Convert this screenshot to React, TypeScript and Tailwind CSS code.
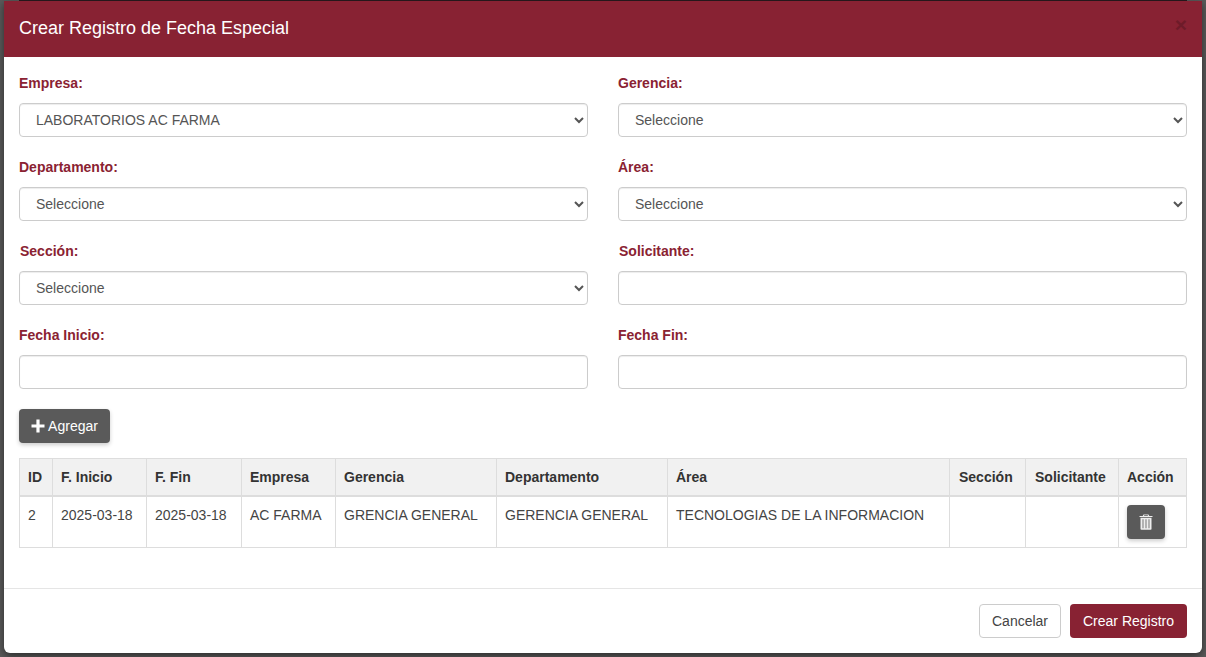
import React from "react";

const font = { fontFamily: '"Liberation Sans", Arial, sans-serif' };
const cols = [33, 94, 95, 94, 161, 171, 282, 76, 93, 68];

function Field({ label, nudge, children }: { label: string; nudge?: boolean; children: React.ReactNode }) {
  return (
    <div className="flex h-[84px] flex-col">
      <label className={`mt-[1px] mb-[10px] block h-[20px] text-[14px] leading-[20px] font-bold text-[#8a2232] ${nudge ? "pl-[1px]" : ""}`}>{label}</label>
      {children}
    </div>
  );
}

function Sel({ value }: { value: string }) {
  return (
    <select
      defaultValue={value}
      className="h-[34px] w-full rounded-[4px] border border-[#cccccc] bg-white px-[12px] text-[14px] text-[#555555] shadow-[inset_0_1px_1px_rgba(0,0,0,0.075)]"
    >
      <option>{value}</option>
    </select>
  );
}

function Inp() {
  return <input className="h-[34px] w-full rounded-[4px] border border-[#cccccc] bg-white px-[12px] text-[14px] text-[#555555] shadow-[inset_0_1px_1px_rgba(0,0,0,0.075)]" />;
}

const heads = ["ID", "F. Inicio", "F. Fin", "Empresa", "Gerencia", "Departamento", "Área", "Sección", "Solicitante", "Acción"];
const cells = ["2", "2025-03-18", "2025-03-18", "AC FARMA", "GRENCIA GENERAL", "GERENCIA GENERAL", "TECNOLOGIAS DE LA INFORMACION", "", ""];

export default function App() {
  return (
    <div className="h-[657px] w-[1206px] overflow-hidden bg-[#5a5a5a]" style={font}>
      <div className="ml-[19px] h-[1px] w-[1168px] bg-[#2a1a1f]" />
      <div className="ml-[4px] flex h-[652px] w-[1198px] flex-col overflow-hidden rounded-b-[6px] bg-white shadow-[0_3px_9px_rgba(0,0,0,0.5)]">
        <header className="flex h-[56px] shrink-0 items-center justify-between bg-[#882233] px-[15px] pb-[2px]">
          <h4 className="text-[18px] leading-[20px] text-white">Crear Registro de Fecha Especial</h4>
          <span className="-mt-[8px] text-[21px] leading-none font-bold text-[#6e1b29]">×</span>
        </header>
        <main className="flex-1 px-[15px] pt-[15px]">
          <div className="grid grid-cols-2 gap-x-[30px]">
            <Field label="Empresa:"><Sel value="LABORATORIOS AC FARMA" /></Field>
            <Field label="Gerencia:"><Sel value="Seleccione" /></Field>
            <Field label="Departamento:"><Sel value="Seleccione" /></Field>
            <Field label="Área:"><Sel value="Seleccione" /></Field>
            <Field label="Sección:" nudge><Sel value="Seleccione" /></Field>
            <Field label="Solicitante:" nudge><Inp /></Field>
            <Field label="Fecha Inicio:"><Inp /></Field>
            <Field label="Fecha Fin:"><Inp /></Field>
          </div>
          <button className="mt-[1px] flex h-[34px] w-[91px] items-center justify-center gap-[3px] rounded-[4px] bg-[#5a5a5a] text-[14px] text-white shadow-[0_2px_4px_rgba(0,0,0,0.2)]">
            <svg width="14" height="14" viewBox="0 0 14 14" fill="white"><path d="M5.4 0.5h3.2v4.9h4.9v3.2H8.6v4.9H5.4V8.6H0.5V5.4h4.9z" /></svg>
            Agregar
          </button>
          <table className="mt-[15px] w-[1168px] table-fixed border-collapse text-[14px] text-[#444444]">
            <colgroup>
              {cols.map((w, i) => <col key={i} style={{ width: w }} />)}
            </colgroup>
            <thead>
              <tr className="h-[37px] bg-[#f1f1f1]">
                {heads.map((h, i) => (
                  <th key={h} className={`border border-b-2 border-[#dddddd] pt-[2px] pr-[8px] text-left font-bold text-[#333333] ${i === 7 || i === 8 ? "pl-[9px]" : "pl-[8px]"}`}>{h}</th>
                ))}
              </tr>
            </thead>
            <tbody>
              <tr className="h-[52px]">
                {cells.map((c, i) => (
                  <td key={i} className="border border-[#dddddd] px-[8px] pt-[8px] align-top leading-[20px]">{c}</td>
                ))}
                <td className="border border-[#dddddd] px-[8px] pt-[8px] align-top">
                  <button className="flex h-[34px] w-[38px] items-center justify-center rounded-[4px] bg-[#5a5a5a] shadow-[0_2px_4px_rgba(0,0,0,0.2)]">
                    <svg width="14" height="16" viewBox="0 0 14 16" fill="#eeeeee">
                      <path d="M4.5 0.5h5l.8 1.5H13.5v1H0.5V2h3.2zM5.3 1.3l-.3.7h4l-.3-.7z" fillRule="evenodd" />
                      <path d="M1.5 3.8h11V15a.8.8 0 0 1-.8.8H2.3a.8.8 0 0 1-.8-.8zM3.6 5.2v9h.8v-9zM6.6 5.2v9h.8v-9zM9.6 5.2v9h.8v-9z" fillRule="evenodd" />
                    </svg>
                  </button>
                </td>
              </tr>
            </tbody>
          </table>
        </main>
        <footer className="flex h-[65px] shrink-0 items-start justify-end gap-[9px] border-t border-[#e5e5e5] pt-[15px] pr-[15px]">
          <button className="h-[34px] w-[82px] rounded-[4px] border border-[#cccccc] bg-white text-[14px] text-[#444444]">Cancelar</button>
          <button className="h-[34px] w-[117px] rounded-[4px] bg-[#882233] text-[14px] text-white">Crear Registro</button>
        </footer>
      </div>
    </div>
  );
}
